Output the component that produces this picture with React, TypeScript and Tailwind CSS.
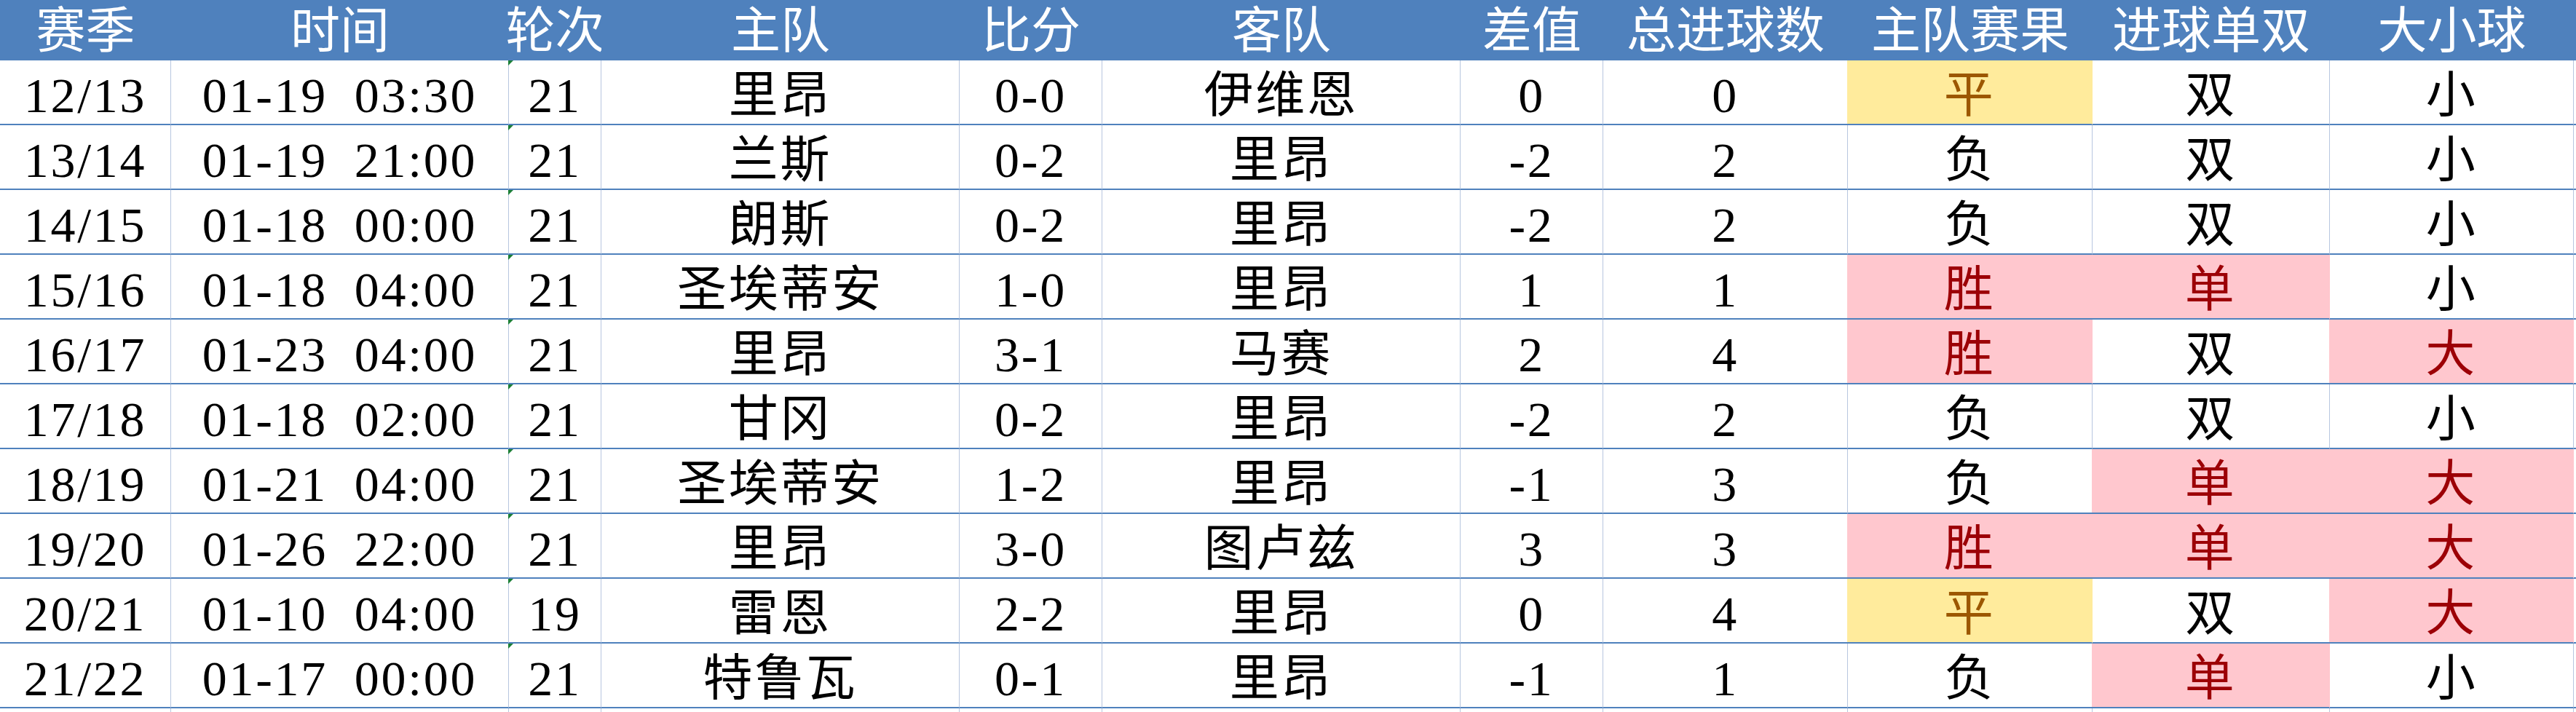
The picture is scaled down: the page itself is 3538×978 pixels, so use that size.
import type { ReactNode } from 'react'

type Fill = 'none' | 'neutral' | 'bad'

const headers = ['赛季', '时间', '轮次', '主队', '比分', '客队', '差值', '总进球数', '主队赛果', '进球单双', '大小球']

// 赛季, 时间, 轮次, 主队, 比分, 客队, 差值, 总进球数, 主队赛果, 进球单双, 大小球
const rows: string[][] = [
  ['12/13', '01-19 03:30', '21', '里昂', '0-0', '伊维恩', '0', '0', '平', '双', '小'],
  ['13/14', '01-19 21:00', '21', '兰斯', '0-2', '里昂', '-2', '2', '负', '双', '小'],
  ['14/15', '01-18 00:00', '21', '朗斯', '0-2', '里昂', '-2', '2', '负', '双', '小'],
  ['15/16', '01-18 04:00', '21', '圣埃蒂安', '1-0', '里昂', '1', '1', '胜', '单', '小'],
  ['16/17', '01-23 04:00', '21', '里昂', '3-1', '马赛', '2', '4', '胜', '双', '大'],
  ['17/18', '01-18 02:00', '21', '甘冈', '0-2', '里昂', '-2', '2', '负', '双', '小'],
  ['18/19', '01-21 04:00', '21', '圣埃蒂安', '1-2', '里昂', '-1', '3', '负', '单', '大'],
  ['19/20', '01-26 22:00', '21', '里昂', '3-0', '图卢兹', '3', '3', '胜', '单', '大'],
  ['20/21', '01-10 04:00', '19', '雷恩', '2-2', '里昂', '0', '4', '平', '双', '大'],
  ['21/22', '01-17 00:00', '21', '特鲁瓦', '0-1', '里昂', '-1', '1', '负', '单', '小'],
]

function fillFor(value: string): Fill {
  if (value === '平') return 'neutral'
  if (value === '胜' || value === '单' || value === '大') return 'bad'
  return 'none'
}

const fillClass: Record<Fill, string> = {
  none: 'bg-white text-black border-r-[#b7c6df]',
  neutral: '-ml-px bg-[#ffeb9c] text-[#9c5700] border-r-[#ffeb9c]',
  bad: '-ml-px bg-[#ffc7ce] text-[#9c0006] border-r-[#ffc7ce]',
}

function Cell({ children, fill = 'none', marker }: { children: ReactNode; fill?: Fill; marker?: boolean }) {
  return (
    <div
      className={`relative flex items-center justify-center whitespace-pre pt-[9px] tracking-[0.04em] border-r border-b-2 border-b-[#4f81bd] ${fillClass[fill]}`}
    >
      {marker && (
        <span className="absolute -left-px top-0 h-0 w-0 border-t-[7px] border-r-[7px] border-t-[#1b7f36] border-r-transparent" />
      )}
      {children}
    </div>
  )
}

export default function App() {
  return (
    <div className="w-[3538px] h-[978px] overflow-hidden bg-white font-['Liberation_Serif','Noto_Sans_CJK_SC',serif] text-[68px] leading-none [word-spacing:0.25em]">
      <div className="grid grid-cols-[235px_464px_127px_492px_196px_492px_196px_336px_336px_326px_335px_3px] grid-rows-[83px_repeat(10,89px)_5px]">
        {headers.map((h) => (
          <div key={h} className="flex items-center justify-center whitespace-nowrap bg-[#4f81bd] pt-[3px] text-white">
            {h}
          </div>
        ))}
        <div className="bg-[#4f81bd]" />

        {rows.map((r) => (
          <div key={r[0]} className="contents">
            {r.map((v, i) => (
              <Cell key={i} fill={i >= 8 ? fillFor(v) : 'none'} marker={i === 2}>
                {v}
              </Cell>
            ))}
            <div className="border-b-2 border-b-[#4f81bd]" />
          </div>
        ))}

        {headers.map((h) => (
          <div key={`end-${h}`} className="border-r border-r-[#b7c6df]" />
        ))}
        <div />
      </div>
    </div>
  )
}
